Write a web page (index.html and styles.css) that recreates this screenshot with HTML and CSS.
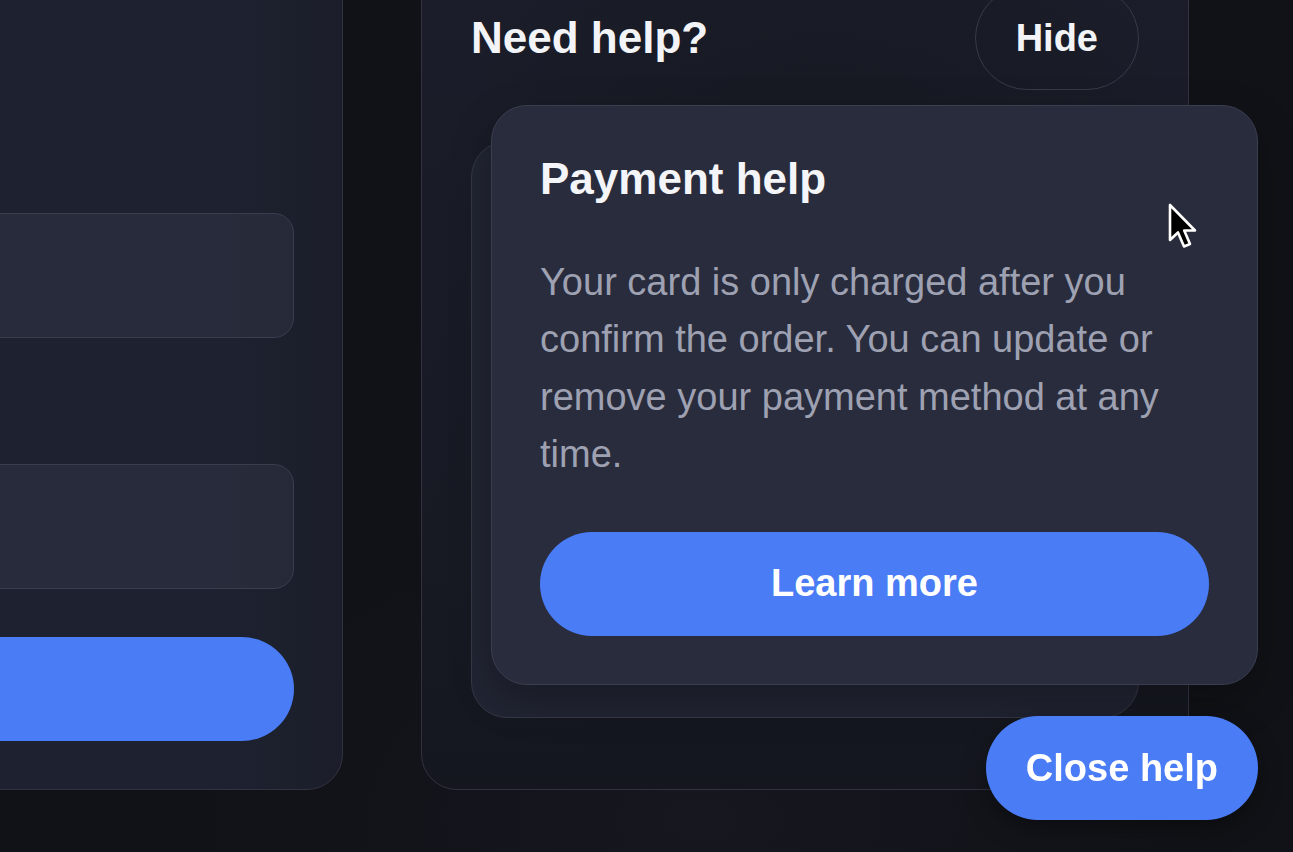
FILE: index.html
```html
<!DOCTYPE html>
<html lang="en">
<head>
<meta charset="utf-8">
<title>Checkout – Need help?</title>
<link rel="stylesheet" href="styles.css">
</head>
<body>
<main class="stage">
  <section class="panel form-panel">
    <div class="field"></div>
    <div class="field field-second"></div>
    <button class="primary-btn wide" type="button"></button>
  </section>

  <aside class="panel help-panel">
    <header class="help-header">
      <h2 class="help-title">Need help?</h2>
      <button class="ghost-btn" type="button">Hide</button>
    </header>
    <div class="card-stack">
      <div class="card card-back" aria-hidden="true"></div>
      <article class="card card-front">
        <h3 class="card-title">Payment help</h3>
        <p class="card-text">Your card is only charged after you confirm the order. You can update or remove your payment method at any time.</p>
        <button class="primary-btn block" type="button">Learn more</button>
      </article>
    </div>
  </aside>
</main>

<button class="primary-btn floating" type="button">Close help</button>

<svg class="cursor" width="32" height="50" viewBox="0 0 32 50" aria-hidden="true">
  <path d="M3 3 L3 38 L11 30.5 L17 44.5 L23 42 L17.2 28.5 L28 28.5 Z" fill="#000" stroke="#fff" stroke-width="2.6" stroke-linejoin="round"/>
</svg>
</body>
</html>
```

FILE: styles.css
```css
* { box-sizing: border-box; }

html, body {
  margin: 0;
  height: 100%;
}

body {
  width: 1293px;
  height: 852px;
  overflow: hidden;
  position: relative;
  background:
    radial-gradient(ellipse 500px 300px at 700px 820px, #16171f 0%, rgba(18,19,24,0) 100%),
    #111217;
  font-family: "Liberation Sans", Arial, sans-serif;
  color: #f3f4f7;
}

.stage {
  display: flex;
  align-items: flex-start;
  gap: 78px;
  margin-left: -200px;
  margin-top: -60px;
}

.panel {
  border: 1px solid #30333f;
  border-radius: 36px;
}

/* left form panel */
.form-panel {
  width: 543px;
  padding: 272px 48px 48px 0;
  display: flex;
  flex-direction: column;
  background:
    linear-gradient(90deg, rgba(30,33,48,0) 0%, rgba(30,33,48,0) 80%, rgba(28,32,44,1) 90%, rgba(27,30,42,1) 100%),
    #1e2130;
}

.field {
  height: 125px;
  border: 1px solid #3a3d4d;
  border-radius: 20px;
  background: linear-gradient(90deg, #282b3b 0%, #282b3b 85%, #262a38 100%);
}

.field-second {
  margin-top: 126px;
}

.form-panel .primary-btn.wide {
  margin-top: 48px;
  height: 104px;
  width: 100%;
}

/* right help panel */
.help-panel {
  width: 768px;
  padding: 45px 49px 71px 49px;
  background:
    radial-gradient(ellipse 420px 520px at 400px 420px, #14161e 0%, rgba(20,22,30,0) 100%),
    linear-gradient(180deg, #1b1e2a 0%, #181b25 60%, #15171f 100%);
}

.help-header {
  display: flex;
  align-items: center;
  justify-content: space-between;
  height: 104px;
}

.help-title {
  margin: 0;
  font-size: 44px;
  font-weight: 700;
  line-height: 1.15;
  color: #f3f4f7;
}

.ghost-btn {
  height: 104px;
  padding: 0 40px;
  border: 1px solid #363a49;
  border-radius: 52px;
  background: transparent;
  color: #f3f4f7;
  font-family: inherit;
  font-size: 38px;
  font-weight: 700;
}

.card-stack {
  position: relative;
  margin-top: 51px;
}

.card {
  border: 1px solid #3a3e4f;
  border-radius: 36px;
}

.card-back {
  height: 577px;
  background: #212432;
  border-color: #353847;
}

.card-front {
  position: absolute;
  left: 20px;
  top: -36px;
  width: 767px;
  padding: 48px;
  background: #292c3c;
  box-shadow: 0 16px 40px rgba(0,0,0,0.25);
}

.card-title {
  margin: 0;
  font-size: 44px;
  font-weight: 700;
  line-height: 1.15;
  color: #f4f5f8;
}

.card-text {
  margin: 49px 0 0;
  font-size: 38px;
  line-height: 57.5px;
  color: #9ea1b2;
}

.primary-btn {
  display: flex;
  align-items: center;
  justify-content: center;
  border: none;
  border-radius: 52px;
  background: #4a7cf6;
  color: #ffffff;
  font-family: inherit;
  font-size: 38px;
  font-weight: 700;
}

.primary-btn.block {
  width: 100%;
  height: 104px;
  margin-top: 48px;
}

.primary-btn.floating {
  position: fixed;
  right: 35px;
  bottom: 32px;
  height: 104px;
  padding: 0 40px;
  box-shadow: 0 8px 24px rgba(0,0,0,0.35);
}

.cursor {
  position: fixed;
  left: 1167px;
  top: 202px;
}
```
